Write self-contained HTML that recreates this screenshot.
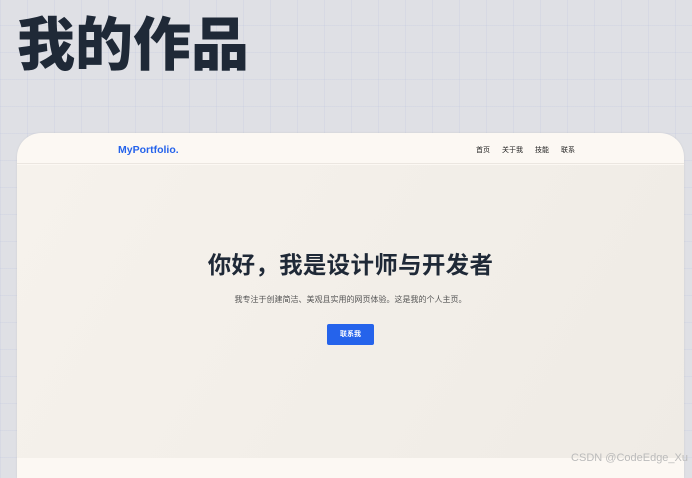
<!DOCTYPE html>
<html><head><meta charset="utf-8"><style>
*{margin:0;padding:0;box-sizing:border-box}
body{width:692px;height:470px;overflow:hidden;position:relative;font-family:"Liberation Sans","Noto Sans CJK SC",sans-serif;
background-color:#dfe0e5;
background-image:linear-gradient(rgba(150,160,210,.1) 1px,transparent 1px),linear-gradient(90deg,rgba(150,160,210,.1) 1px,transparent 1px);
background-size:27px 27px;background-position:0 -2px}
.t{position:absolute;left:17px;top:9px;font-size:58px;font-weight:900;color:#1f2937;letter-spacing:0px;line-height:74px}
.card{position:absolute;left:17px;top:133px;width:667px;height:345px;background:#fcf8f3;border-radius:24px 24px 0 0;overflow:hidden;box-shadow:0 0 2px rgba(0,0,0,.08)}
.hd{height:31px;border-bottom:1px solid #ebe6e0;position:relative}
.logo{position:absolute;left:101px;top:11px;font-size:10.5px;font-weight:bold;color:#2563eb}
.nav{position:absolute;left:459px;top:12px;font-size:7px;color:#222;white-space:nowrap}
.nav span{margin-right:12px}
.hero{position:absolute;top:32px;left:0;right:0;height:293px;background:linear-gradient(120deg,#f6f2ec,#efebe5);text-align:center}
h1{margin-top:84px;font-size:23.5px;font-weight:bold;color:#1f2937;letter-spacing:.3px;line-height:32px}
p{margin-top:13px;font-size:8px;color:#555}
.btn{display:inline-block;margin-top:19px;width:47px;height:21px;background:#2563eb;color:#fff;font-size:7px;font-weight:bold;line-height:21px;border-radius:2px}
.wm{position:absolute;right:4px;bottom:6px;font-size:11px;color:#bbb}
</style></head><body>
<div class="t">我的作品</div>
<div class="card">
<div class="hd"><div class="logo">MyPortfolio.</div><div class="nav"><span>首页</span><span>关于我</span><span>技能</span><span>联系</span></div></div>
<div class="hero"><h1>你好，我是设计师与开发者</h1><p>我专注于创建简洁、美观且实用的网页体验。这是我的个人主页。</p><div class="btn">联系我</div></div>
</div>
<div class="wm">CSDN @CodeEdge_Xu</div>
</body></html>
